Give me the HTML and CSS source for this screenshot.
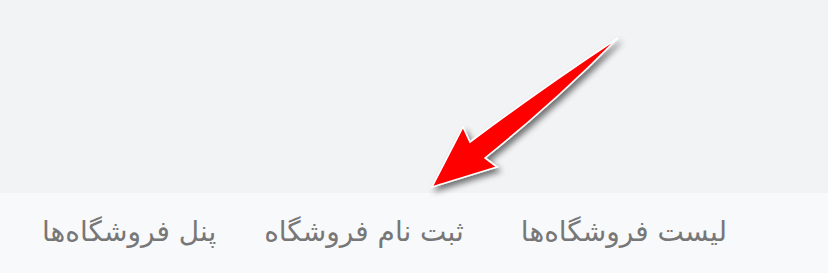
FILE: index.html
```html
<!DOCTYPE html>
<html lang="fa" dir="rtl">
<head>
<meta charset="utf-8">
<link rel="stylesheet" href="styles.css">
</head>
<body>
<div class="page">
  <div class="top"></div>
  <nav class="bar">
    <a class="item i1">لیست فروشگاه‌ها</a>
    <a class="item i2">ثبت نام فروشگاه</a>
    <a class="item i3">پنل فروشگاه‌ها</a>
  </nav>
  <svg class="arrow" width="828" height="273" viewBox="0 0 828 273" xmlns="http://www.w3.org/2000/svg">
    <defs>
      <filter id="sh" x="-20%" y="-20%" width="140%" height="140%">
        <feGaussianBlur in="SourceAlpha" stdDeviation="3"/>
        <feOffset dx="3" dy="4" result="b"/>
        <feComponentTransfer><feFuncA type="linear" slope="0.55"/></feComponentTransfer>
        <feMerge><feMergeNode/><feMergeNode in="SourceGraphic"/></feMerge>
      </filter>
    </defs>
    <path filter="url(#sh)" d="M432 187 L463 127 L470 142 Q545 86 618 38 Q555 102 485 158 L497 167 Z" fill="#ff0000" stroke="#ffffff" stroke-width="1.6" stroke-linejoin="miter"/>
  </svg>
</div>
</body>
</html>
```
FILE: styles.css
```css
html, body {
  margin: 0;
  padding: 0;
}
body {
  width: 828px;
  height: 273px;
  overflow: hidden;
  background: #f8f9fa;
  font-family: "DejaVu Sans", "Noto Sans", sans-serif;
}
.page {
  position: relative;
  width: 828px;
  height: 273px;
}
.top {
  height: 193px;
  background: #f2f3f5;
}
.bar {
  height: 80px;
  background: #f8f9fa;
  display: flex;
  flex-direction: row;
  align-items: center;
  padding-right: 101px;
  padding-bottom: 4px;
  box-sizing: border-box;
}
.item {
  color: #777777;
  font-size: 28px;
  white-space: nowrap;
}
.i2 { margin-right: 57px; }
.i3 { margin-right: 48px; }
.arrow {
  position: absolute;
  left: 0;
  top: 0;
  pointer-events: none;
}
```
